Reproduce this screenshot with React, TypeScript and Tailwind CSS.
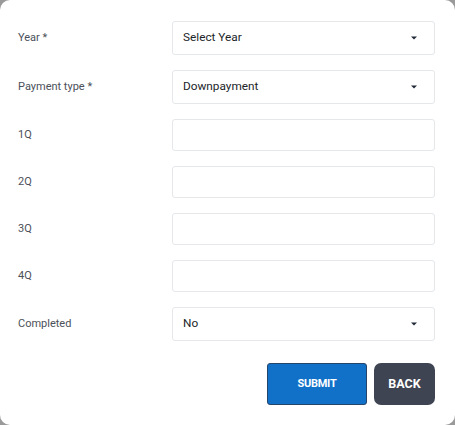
import React from "react";

type Row = { label: string; kind: "select" | "input"; value?: string };

const rows: Row[] = [
  { label: "Year *", kind: "select", value: "Select Year" },
  { label: "Payment type *", kind: "select", value: "Downpayment" },
  { label: "1Q", kind: "input" },
  { label: "2Q", kind: "input" },
  { label: "3Q", kind: "input" },
  { label: "4Q", kind: "input" },
  { label: "Completed", kind: "select", value: "No" },
];

function Caret() {
  return (
    <svg width="6" height="4" viewBox="0 0 6 4" className="text-[#1f2937]">
      <path d="M0 0.5h6L3 3.5z" fill="currentColor" />
    </svg>
  );
}

export default function App() {
  return (
    <div className="w-[455px] h-[425px] bg-[#9a9a9a] font-['Roboto',sans-serif]">
      <div className="w-full h-full bg-white rounded-[10px] px-[18px] pt-[21px] pr-[20px] flex flex-col">
        {/* Fields */}
        <div className="flex flex-col gap-[15px]">
          {rows.map((r) => (
            <div key={r.label} className="flex items-center">
              <span className="w-[154px] text-[11px] text-[#4b5059]">{r.label}</span>
              {r.kind === "select" ? (
                <div className="flex-1 h-[34px] border border-[#e5e7eb] rounded-[3px] flex items-center justify-between pl-[10px] pr-[17px]">
                  <span className="text-[11.8px] text-[#212529]">{r.value}</span>
                  <Caret />
                </div>
              ) : (
                <div className="flex-1 h-[32px] border border-[#e5e7eb] rounded-[3px]" />
              )}
            </div>
          ))}
        </div>

        {/* Actions */}
        <div className="flex justify-end gap-[7px] mt-[22px]">
          <button className="w-[100px] h-[42px] bg-[#1170c8] border border-[#27446b] rounded-[3px] text-white text-[11px] font-bold tracking-tight">
            SUBMIT
          </button>
          <button className="w-[61px] h-[42px] bg-[#3e4451] rounded-[7px] text-white text-[12.5px] font-bold">
            BACK
          </button>
        </div>
      </div>
    </div>
  );
}
